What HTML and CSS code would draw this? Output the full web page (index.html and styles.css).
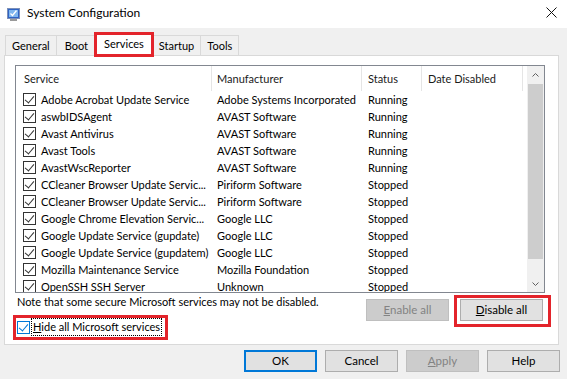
FILE: index.html
```html
<!DOCTYPE html>
<html lang="en">
<head>
  <meta charset="UTF-8">
  <title>System Configuration</title>
  <link rel="stylesheet" href="styles.css">
</head>
<body>
  <div class="titlebar">
    <svg class="app-icon" width="16" height="16" viewBox="0 0 16 16">
      <rect x="1.5" y="1.5" width="12" height="10" fill="#2f63c4" stroke="#7b8fb8"/>
      <rect x="3" y="3" width="9" height="7" fill="#7fb6ee"/>
      <path d="M4.5 6.5l2 2 4-5" stroke="#ffffff" stroke-width="1.3" fill="none"/>
      <rect x="4" y="12" width="7" height="2" fill="#9a9a9a"/>
    </svg>
    <span class="title">System Configuration</span>
    <svg class="close" width="11" height="11" viewBox="0 0 11 11">
      <path d="M0.5 0.5l10 10M10.5 0.5l-10 10" stroke="#111" stroke-width="1"/>
    </svg>
  </div>

  <div class="dialog">
    <div class="tabs">
      <div class="tab">General</div>
      <div class="tab tab-boot">Boot</div>
      <div class="tab active">Services<span class="mark"></span></div>
      <div class="tab">Startup</div>
      <div class="tab">Tools</div>
    </div>

    <div class="panel">
      <div class="listview">
        <div class="list-body">
          <div class="list-head">
            <div class="hcell">Service</div>
            <div class="hcell">Manufacturer</div>
            <div class="hcell">Status</div>
            <div class="hcell">Date Disabled</div>
          </div>
          <div class="rows">
            <div class="row"><div class="cell name"><span class="cb"></span>Adobe Acrobat Update Service</div><div class="cell">Adobe Systems Incorporated</div><div class="cell">Running</div><div class="cell"></div></div>
            <div class="row"><div class="cell name"><span class="cb"></span>aswbIDSAgent</div><div class="cell">AVAST Software</div><div class="cell">Running</div><div class="cell"></div></div>
            <div class="row"><div class="cell name"><span class="cb"></span>Avast Antivirus</div><div class="cell">AVAST Software</div><div class="cell">Running</div><div class="cell"></div></div>
            <div class="row"><div class="cell name"><span class="cb"></span>Avast Tools</div><div class="cell">AVAST Software</div><div class="cell">Running</div><div class="cell"></div></div>
            <div class="row"><div class="cell name"><span class="cb"></span>AvastWscReporter</div><div class="cell">AVAST Software</div><div class="cell">Running</div><div class="cell"></div></div>
            <div class="row"><div class="cell name"><span class="cb"></span>CCleaner Browser Update Servic...</div><div class="cell">Piriform Software</div><div class="cell">Stopped</div><div class="cell"></div></div>
            <div class="row"><div class="cell name"><span class="cb"></span>CCleaner Browser Update Servic...</div><div class="cell">Piriform Software</div><div class="cell">Stopped</div><div class="cell"></div></div>
            <div class="row"><div class="cell name"><span class="cb"></span>Google Chrome Elevation Servic...</div><div class="cell">Google LLC</div><div class="cell">Stopped</div><div class="cell"></div></div>
            <div class="row"><div class="cell name"><span class="cb"></span>Google Update Service (gupdate)</div><div class="cell">Google LLC</div><div class="cell">Stopped</div><div class="cell"></div></div>
            <div class="row"><div class="cell name"><span class="cb"></span>Google Update Service (gupdatem)</div><div class="cell">Google LLC</div><div class="cell">Stopped</div><div class="cell"></div></div>
            <div class="row"><div class="cell name"><span class="cb"></span>Mozilla Maintenance Service</div><div class="cell">Mozilla Foundation</div><div class="cell">Stopped</div><div class="cell"></div></div>
            <div class="row"><div class="cell name"><span class="cb"></span>OpenSSH SSH Server</div><div class="cell">Unknown</div><div class="cell">Stopped</div><div class="cell"></div></div>
          </div>
        </div>
        <div class="scrollbar">
          <div class="sb-arrow">
            <svg width="7" height="4" viewBox="0 0 7 4"><path d="M0.5 3.5l3-3 3 3" stroke="#606060" fill="none"/></svg>
          </div>
          <div class="sb-track"><div class="sb-thumb"></div></div>
          <div class="sb-arrow">
            <svg width="7" height="4" viewBox="0 0 7 4"><path d="M0.5 0.5l3 3 3-3" stroke="#606060" fill="none"/></svg>
          </div>
        </div>
      </div>

      <div class="panel-foot">
        <div class="foot-left">
          <p class="note">Note that some secure Microsoft services may not be disabled.</p>
          <label class="hide-ms">
            <span class="cb cb-focus"></span>
            <span class="focus-text"><u>H</u>ide all Microsoft services</span>
            <span class="mark"></span>
          </label>
        </div>
        <div class="foot-right">
          <button class="btn btn-wide" disabled><u>E</u>nable all</button>
          <div class="marked">
            <button class="btn btn-wide"><u>D</u>isable all</button>
            <span class="mark"></span>
          </div>
        </div>
      </div>
    </div>

    <div class="actions">
      <button class="btn btn-default">OK</button>
      <button class="btn">Cancel</button>
      <button class="btn" disabled><u>A</u>pply</button>
      <button class="btn">Help</button>
    </div>
  </div>
</body>
</html>
```

FILE: styles.css
```css
html, body {
  margin: 0;
  padding: 0;
}

body {
  background: #f0f0f0;
  color: #000;
  font-family: "Segoe UI", Lato, "Noto Sans", sans-serif;
  font-size: 11px;
  line-height: 16px;
  overflow: hidden;
}

/* title bar */
.titlebar {
  height: 28px;
  background: #fff;
  display: flex;
  align-items: center;
  padding-left: 6px;
}

.app-icon {
  margin-right: 5px;
  margin-top: 1px;
}

.title {
  font-size: 12px;
  margin-top: -2px;
}

.close {
  margin-left: auto;
  margin-right: 10px;
  margin-top: -4px;
}

/* tabs */
.tabs {
  display: flex;
  align-items: flex-end;
  height: 20px;
  margin-top: 7px;
  padding-left: 5px;
  position: relative;
  z-index: 1;
}

.tab {
  height: 20px;
  box-sizing: border-box;
  padding: 0 6px;
  border: 1px solid #d9d9d9;
  border-bottom: none;
  margin-right: -1px;
  background: #f0f0f0;
  line-height: 19px;
}

.tab-boot {
  padding: 0 8px;
}

.tab.active {
  position: relative;
  height: 23px;
  margin: 0 -2px -1px -2px;
  padding: 0 9px;
  background: #fff;
  z-index: 2;
}

.mark {
  position: absolute;
  border: 3px solid #e3242b;
  pointer-events: none;
}

.tab.active .mark {
  left: -1px;
  right: -1px;
  top: -2px;
  bottom: -1px;
}

/* panel */
.panel {
  margin-left: 4px;
  width: 555px;
  box-sizing: border-box;
  background: #fff;
  border: 1px solid #d9d9d9;
  padding: 9px 13px 6px 10px;
}

.listview {
  display: flex;
  height: 228px;
  box-sizing: border-box;
  border: 1px solid #828790;
  background: #fff;
}

.list-body {
  flex: 1;
  overflow: hidden;
}

.list-head,
.row {
  display: grid;
  grid-template-columns: 196px 150px 60px 101px;
  white-space: nowrap;
}

.list-head {
  height: 25px;
  line-height: 25px;
}

.hcell {
  padding-left: 6px;
  border-right: 1px solid #e5e5e5;
  color: #1a1a1a;
}

.hcell:first-child {
  padding-left: 8px;
}

.hcell:nth-child(2) {
  padding-left: 5px;
}

.row {
  height: 17px;
  line-height: 17px;
}

.cell {
  padding-left: 6px;
  overflow: hidden;
}

.cell:nth-child(2) {
  padding-left: 5px;
}

.cell.name {
  display: flex;
  align-items: center;
  padding-left: 7px;
}

/* checkbox */
.cb {
  position: relative;
  flex: none;
  display: inline-block;
  width: 13px;
  height: 13px;
  box-sizing: border-box;
  border: 1px solid #333;
  background: #fff;
  margin-right: 5px;
}

.cb::after {
  content: '';
  position: absolute;
  left: 3px;
  top: 0px;
  width: 4px;
  height: 8px;
  border: solid #333;
  border-width: 0 1px 1px 0;
  transform: rotate(40deg);
}

.cb-focus {
  border-color: #0078d7;
  margin-right: 2px;
}

.cb-focus::after {
  border-color: #0078d7;
}

/* scrollbar */
.scrollbar {
  width: 17px;
  display: flex;
  flex-direction: column;
  background: #f0f0f0;
}

.sb-arrow {
  height: 17px;
  display: flex;
  align-items: center;
  justify-content: center;
}

.sb-track {
  flex: 1;
  padding: 1px 1px 16px;
  display: flex;
}

.sb-thumb {
  flex: 1;
  background: #cdcdcd;
}

/* footer of the panel */
.panel-foot {
  display: flex;
  justify-content: space-between;
  padding-left: 2px;
}

.note {
  margin: 1px 0 0;
}

.hide-ms {
  position: relative;
  display: inline-flex;
  align-items: center;
  margin-top: 9px;
}

.focus-text {
  outline: 1px dotted #000;
  outline-offset: 0;
  padding: 0 1px;
}

.hide-ms .mark {
  left: -4px;
  top: -4px;
  right: -7px;
  bottom: -5px;
}

.foot-right {
  display: flex;
  gap: 11px;
  margin-top: 6px;
  margin-right: 2px;
  align-items: flex-start;
}

.marked {
  position: relative;
  display: flex;
}

.marked .mark {
  left: -6px;
  right: -8px;
  top: -4px;
  bottom: -6px;
}

/* buttons */
.btn {
  font: inherit;
  font-size: 11.5px;
  width: 73px;
  height: 22px;
  padding: 0;
  box-sizing: border-box;
  background: #e1e1e1;
  border: 1px solid #adadad;
  color: #000;
}

.btn-wide {
  width: 83px;
}

.btn:disabled {
  background: #cccccc;
  border-color: #bfbfbf;
  color: #838383;
}

.btn-default {
  border: 2px solid #0078d7;
}

.actions {
  display: flex;
  justify-content: flex-end;
  gap: 8px;
  margin-top: 5px;
  padding-right: 7px;
}
```
